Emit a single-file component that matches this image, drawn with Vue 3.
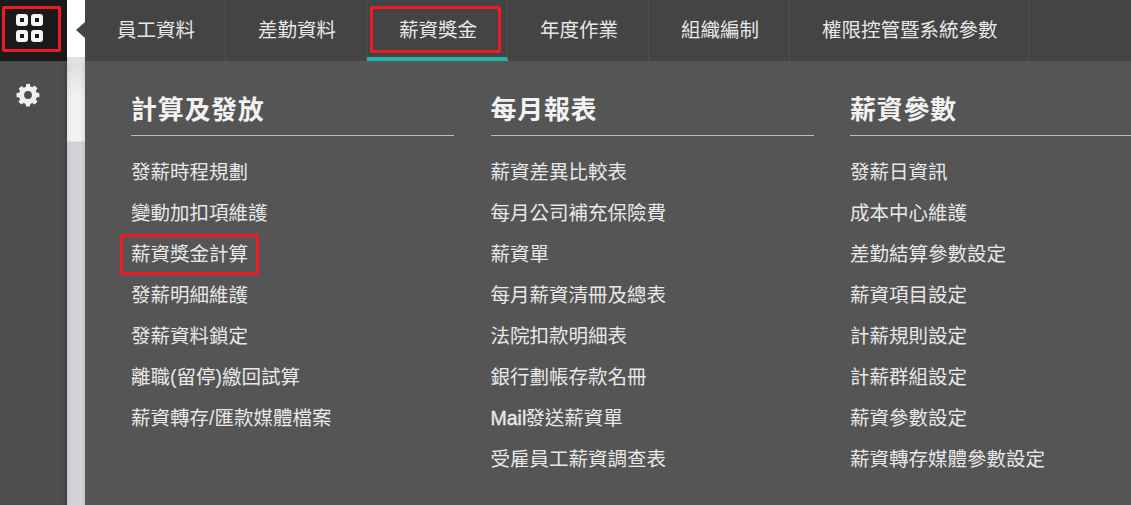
<template>
  <div class="page">
    <aside class="rail">
      <div class="rail-top">
        <button class="apps marked">
          <svg width="28" height="28" viewBox="0 0 28 28">
            <rect v-for="p in appCells" :key="p.x + '-' + p.y" :x="p.x" :y="p.y" width="8" height="8" rx="1" fill="none" stroke="#f4f4f4" stroke-width="4" />
          </svg>
        </button>
      </div>
      <button class="gear">
        <svg width="26" height="26" viewBox="0 0 24 24">
          <path fill="#efefef" fill-rule="evenodd" d="M13.7 1.5l.5 2.6c.6.2 1.2.4 1.7.7l2.2-1.5 2.6 2.5-1.5 2.3c.3.5.6 1.1.7 1.7l2.6.5v3.5l-2.6.5c-.2.6-.4 1.2-.7 1.7l1.5 2.2-2.5 2.6-2.3-1.5c-.5.3-1.1.6-1.7.7l-.5 2.6h-3.5l-.5-2.6c-.6-.2-1.2-.4-1.7-.7l-2.2 1.5-2.6-2.5 1.5-2.3c-.3-.5-.6-1.1-.7-1.7l-2.6-.5v-3.5l2.6-.5c.2-.6.4-1.2.7-1.7L3.4 6.3 5.9 3.7l2.3 1.5c.5-.3 1.1-.6 1.7-.7l.5-2.6zM12 8.4a3.6 3.6 0 1 0 0 7.2 3.6 3.6 0 0 0 0-7.2z" />
        </svg>
      </button>
    </aside>

    <div class="gutter">
      <div class="gutter-top"><span class="notch"></span></div>
      <div class="gutter-band"></div>
      <div class="gutter-rest"></div>
    </div>

    <main class="panel">
      <nav class="tabs">
        <a v-for="tab in tabs" :key="tab" class="tab" :class="{ active: tab === activeTab }">{{ tab }}</a>
      </nav>
      <div class="columns">
        <section v-for="col in columns" :key="col.title" class="column">
          <h2>{{ col.title }}</h2>
          <ul>
            <li v-for="item in col.items" :key="item" :class="{ marked: item === activeItem }">
              <span v-if="item.startsWith('Mail')" class="latin">Mail</span>{{ item.replace('Mail', '') }}
            </li>
          </ul>
        </section>
      </div>
    </main>
  </div>
</template>

<script setup>
const appCells = [
  { x: 2, y: 2 },
  { x: 17, y: 2 },
  { x: 2, y: 18 },
  { x: 17, y: 18 }
]

const tabs = ['員工資料', '差勤資料', '薪資獎金', '年度作業', '組織編制', '權限控管暨系統參數']
const activeTab = '薪資獎金'
const activeItem = '薪資獎金計算'

const columns = [
  {
    title: '計算及發放',
    items: ['發薪時程規劃', '變動加扣項維護', '薪資獎金計算', '發薪明細維護', '發薪資料鎖定', '離職(留停)繳回試算', '薪資轉存/匯款媒體檔案']
  },
  {
    title: '每月報表',
    items: ['薪資差異比較表', '每月公司補充保險費', '薪資單', '每月薪資清冊及總表', '法院扣款明細表', '銀行劃帳存款名冊', 'Mail發送薪資單', '受雇員工薪資調查表']
  },
  {
    title: '薪資參數',
    items: ['發薪日資訊', '成本中心維護', '差勤結算參數設定', '薪資項目設定', '計薪規則設定', '計薪群組設定', '薪資參數設定', '薪資轉存媒體參數設定']
  }
]
</script>

<style>
html, body {
  margin: 0;
  overflow: hidden;
}
</style>

<style scoped>
.page {
  display: flex;
  width: 1131px;
  height: 505px;
  overflow: hidden;
  font-family: "Liberation Sans", "Noto Sans CJK TC", sans-serif;
}

.rail {
  width: 67px;
  flex: none;
  background: #4e4e4c;
  box-shadow: inset -4px 0 4px -3px rgba(0, 0, 0, 0.3);
}

.rail-top {
  height: 61px;
  background: #1a1a1a;
}

button {
  border: 0;
  padding: 0;
  background: none;
  display: flex;
}

.apps {
  position: relative;
  width: 67px;
  height: 61px;
  padding: 14px 0 0 16px;
  box-sizing: border-box;
}

.apps.marked::after {
  content: "";
  position: absolute;
  left: 2px;
  top: 6px;
  width: 59px;
  height: 46px;
  box-sizing: border-box;
  border: 3px solid #ed1c24;
  border-radius: 2px;
}

.gear {
  margin: 21px 0 0 15px;
}

.gutter {
  width: 18px;
  flex: none;
  display: flex;
  flex-direction: column;
  position: relative;
}

.gutter::after {
  content: "";
  position: absolute;
  inset: 0;
  background: linear-gradient(90deg, rgba(0, 0, 0, 0.05), transparent 5px, transparent 13px, rgba(0, 0, 0, 0.07));
  pointer-events: none;
}

.gutter-top {
  position: relative;
  height: 57px;
  background: #fff;
  z-index: 1;
}

.gutter-band {
  height: 86px;
  background: linear-gradient(#e4e4e4 0, #e4e4e4 6px, #dedede 7px, #f2f2f2 40px, #f2f2f2 84px, #c4c4c4 86px);
}

.gutter-rest {
  flex: 1;
  background: #d2d4d8;
}

.notch {
  position: absolute;
  right: 0;
  top: 22px;
  border: 8px solid transparent;
  border-left: 0;
  border-right: 9px solid #444;
}

.panel {
  flex: 1;
  min-width: 0;
  background: #555;
}

.tabs {
  height: 61px;
  display: flex;
  background: #444;
}

.tab {
  position: relative;
  box-sizing: border-box;
  height: 61px;
  padding: 0 30px 0 32px;
  border-right: 1px solid #505050;
  color: #e8e8e8;
  font-size: 19.5px;
  line-height: 61px;
  white-space: nowrap;
}

.tab.active {
  border-bottom: 4px solid #20b5a6;
}

.tab.active::before {
  content: "";
  position: absolute;
  left: 3px;
  top: 6px;
  width: 131px;
  height: 47px;
  box-sizing: border-box;
  border: 3px solid #ed1c24;
  border-radius: 2px;
}

.columns {
  display: grid;
  grid-template-columns: repeat(3, 323px);
  column-gap: 36.5px;
  padding-left: 46px;
}

.column h2 {
  margin: 29px 0 0;
  height: 46px;
  box-sizing: border-box;
  border-bottom: 1px solid #bdbdbd;
  color: #f2f2f2;
  font-size: 26px;
  font-weight: 700;
  line-height: 40px;
  letter-spacing: 0.7px;
}

.column ul {
  list-style: none;
  margin: 16px 0 0;
  padding: 0;
}

.column li {
  position: relative;
  height: 41px;
  color: #e8e8e8;
  font-size: 19.5px;
  line-height: 41px;
  white-space: nowrap;
}

.latin {
  -webkit-text-stroke: 0.4px #e8e8e8;
  margin-right: -1px;
}

.column li.marked::before {
  content: "";
  position: absolute;
  left: -11px;
  top: 0;
  width: 139px;
  height: 41px;
  box-sizing: border-box;
  border: 3px solid #ed1c24;
  border-radius: 2px;
}
</style>
